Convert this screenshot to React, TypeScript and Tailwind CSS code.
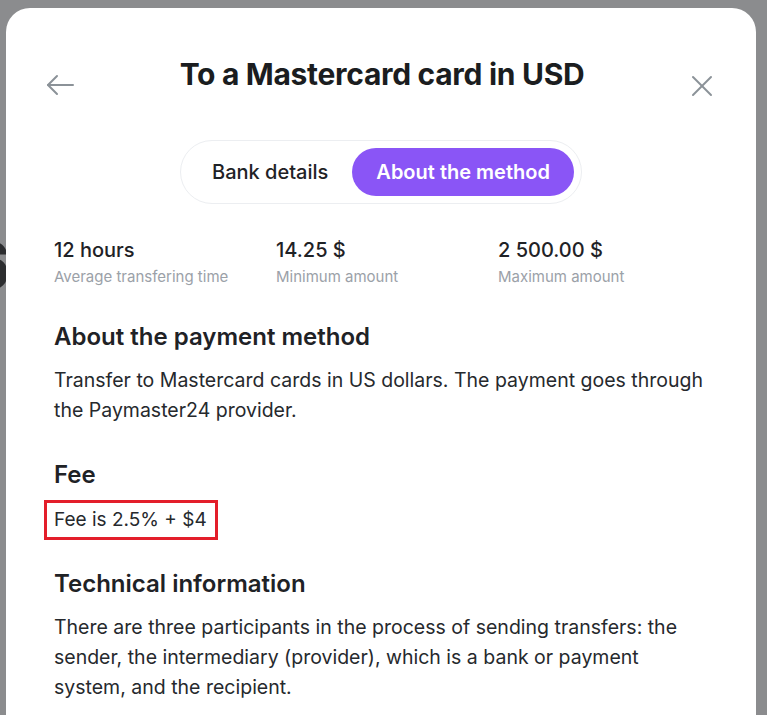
import React, { useState } from 'react';

const stats = [
  { value: '12 hours', label: 'Average transfering time' },
  { value: '14.25 $', label: 'Minimum amount' },
  { value: '2 500.00 $', label: 'Maximum amount' },
];

const ArrowLeft = () => (
  <svg width="28" height="28" viewBox="0 0 28 28" fill="none" stroke="#8b9298" strokeWidth="2" strokeLinecap="round" strokeLinejoin="round">
    <path d="M27 14H2" />
    <path d="M11 5L2 14L11 23" />
  </svg>
);

const CloseIcon = () => (
  <svg width="24" height="24" viewBox="0 0 24 24" fill="none" stroke="#8b9298" strokeWidth="2" strokeLinecap="round">
    <path d="M3 3L21 21" />
    <path d="M21 3L3 21" />
  </svg>
);

const App = () => {
  const [tab, setTab] = useState<'bank' | 'about'>('about');

  return (
    <div
      className="flex h-[715px] w-[767px] overflow-hidden bg-[#8b8c8e] pt-2 text-[#1f2226]"
      style={{ fontFamily: 'Inter, "Noto Sans", sans-serif' }}
    >
      {/* Страница под оверлеем, видна только полоска слева */}
      <div className="flex w-[6px] shrink-0 flex-col overflow-hidden text-[#2c2d2f]">
        <div className="mt-[218px] -ml-[30px] text-[64px] font-semibold leading-[80px]">6</div>
        <div className="mt-[300px] -ml-[10px] text-[18px] leading-[27px] text-[#3a3b3d]">n</div>
        <div className="-ml-[8px] text-[18px] leading-[27px] text-[#3a3b3d]">r</div>
      </div>

      <div className="w-[750px] shrink-0 rounded-t-[24px] bg-white px-[48px] pt-[48px]">
        {/* Заголовок */}
        <div className="-mx-[8px] flex h-[36px] items-start justify-between">
          <button className="mt-[15px] h-[28px]">
            <ArrowLeft />
          </button>
          <h2 className="text-[30px] font-bold leading-[36px] tracking-[-0.01em] text-[#1b1d20]">
            To a Mastercard card in USD
          </h2>
          <button className="mt-[18px] mr-[2px] h-[24px]">
            <CloseIcon />
          </button>
        </div>

        {/* Табы */}
        <div className="mt-[48px] flex justify-center">
          <div className="flex rounded-full border border-[#eceef1] p-[7px]">
            <button
              onClick={() => setTab('bank')}
              className={`h-[48px] rounded-full px-6 text-[20px] leading-[24px] ${
                tab === 'bank' ? 'bg-[#8a55f6] font-semibold text-white' : 'font-medium text-[#1f2226]'
              }`}
            >
              Bank details
            </button>
            <button
              onClick={() => setTab('about')}
              className={`h-[48px] rounded-full px-6 text-[20px] leading-[24px] ${
                tab === 'about' ? 'bg-[#8a55f6] font-semibold text-white' : 'font-medium text-[#1f2226]'
              }`}
            >
              About the method
            </button>
          </div>
        </div>

        {/* Показатели */}
        <div className="mt-[34px] grid grid-cols-[222px_222px_1fr]">
          {stats.map((s) => (
            <div key={s.label}>
              <div className="text-[20px] font-medium leading-[24px]">{s.value}</div>
              <div className="mt-[5px] text-[15px] leading-[20px] text-[#9ba1a8]">{s.label}</div>
            </div>
          ))}
        </div>

        <h3 className="mt-[35px] text-[24px] font-semibold leading-[30px]">About the payment method</h3>
        <p className="mt-[13px] text-[19.5px] leading-[30px] text-[#26292d]">
          Transfer to Mastercard cards in US dollars. The payment goes through the Paymaster24 provider.
        </p>

        <h3 className="mt-[35px] text-[24px] font-semibold leading-[30px]">Fee</h3>
        <div className="mt-[10px]">
          <span className="-ml-[10px] inline-block border-[3px] border-[#e31e2a] py-[2px] pl-[7px] pr-[8px] text-[19px] leading-[30px] text-[#26292d]">
            Fee is 2.5% + $4
          </span>
        </div>

        <h3 className="mt-[29px] text-[24px] font-semibold leading-[30px]">Technical information</h3>
        <p className="mt-[13px] pr-[20px] text-[19.5px] leading-[30px] text-[#26292d]">
          There are three participants in the process of sending transfers: the sender, the intermediary
          (provider), which is a bank or payment system, and the recipient.
        </p>
      </div>
    </div>
  );
};

export default App;
